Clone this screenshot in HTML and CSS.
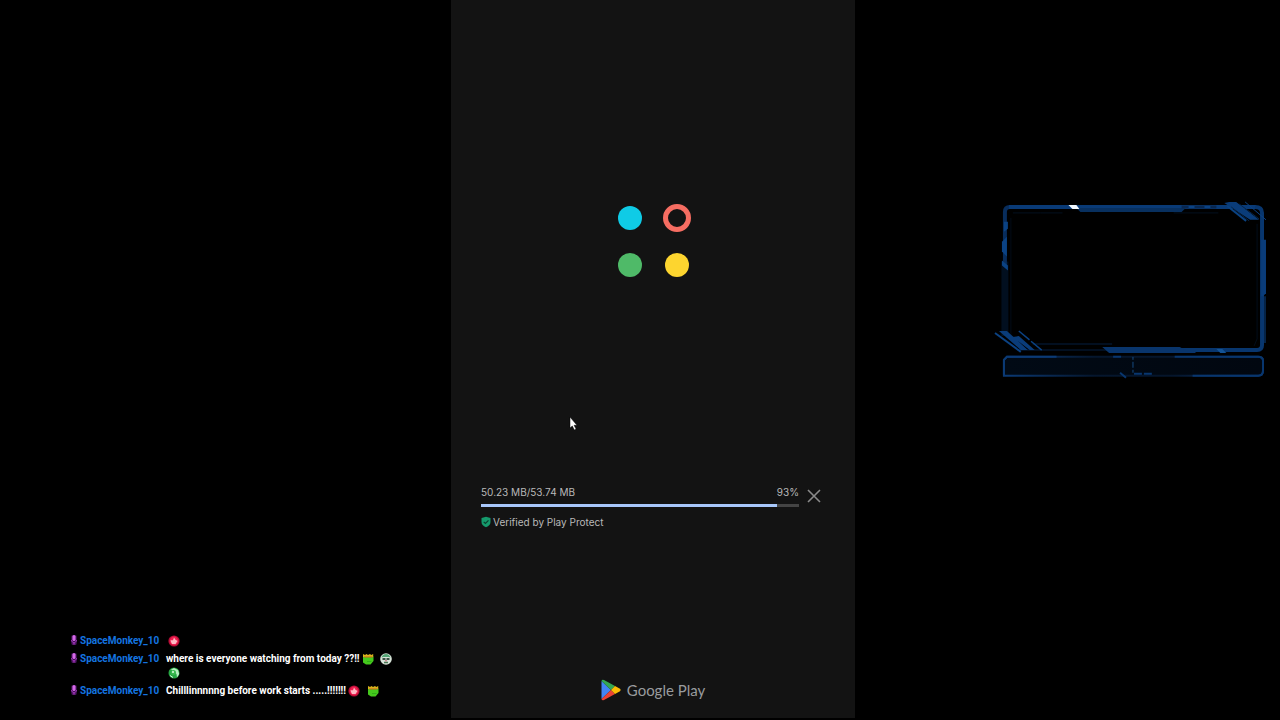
FILE: index.html
```html
<!DOCTYPE html>
<html lang="en">

<head>
    <meta charset="UTF-8">
    <meta name="viewport" content="width=device-width, initial-scale=1.0">
    <title>Stream</title>
    <link rel="stylesheet" href="styles.css">
</head>

<body>
    <!-- shared shapes -->
    <svg class="defs" aria-hidden="true">
        <symbol id="mic" viewBox="0 0 8 12">
            <rect x="1" y="1" width="6" height="10" rx="2" fill="#320c42" />
            <rect x="2.4" y="1" width="3.2" height="6" rx="1.6" fill="#d568e8" />
            <path d="M1.500 6q0 2.500 2.500 2.500T6.500 6M4 8v2M2.500 10h3" fill="none" stroke="#a034b8" />
        </symbol>
        <symbol id="fire" viewBox="0 0 12 12">
            <circle cx="6" cy="6" r="5.6" fill="#b00c34" />
            <circle cx="6" cy="6" r="4.4" fill="#ee1f50" />
            <path d="M2.500 5.200h2.500L6 2.500l1.500 2.200L9.500 6 7.500 9H4L3 7z" fill="#ffb9c4" />
        </symbol>
        <symbol id="frog" viewBox="0 0 12 12">
            <path d="M1 3.5h10.500V8L8.500 11.500H4L1 9.500z" fill="#45c91d" />
            <path d="M1 4V1l2 1L4.500 1 6 2l2-1 1.200 1 2-1v3z" fill="#d9b41d" />
            <path d="M2 4h8.500" stroke="#c8641c" />
            <path d="M5 8.500h4.500" stroke="#2fae17" />
        </symbol>
        <symbol id="face" viewBox="0 0 12 12">
            <circle cx="6" cy="6" r="5.800" fill="#d8e4d9" />
            <path d="M1.500 4.500Q2.500 1 6 1t4.500 3.500L8.500 4h-5z" fill="#54a475" />
            <path d="M2.500 5h3v2h-3zM6.500 5h3v2h-3z" fill="#3b5144" />
            <path d="M4 9.500h4" stroke="#497553" stroke-width="1.500" />
            <path d="M5 7.800h2" stroke="#c66774" />
        </symbol>
        <symbol id="swirl" viewBox="0 0 12 12">
            <circle cx="6" cy="6" r="5.5" fill="#27a844" />
            <path d="M3 2.5L6 1l4 2 1.2 4L9 10.5 8.5 7z" fill="#b5edbf" />
            <circle cx="5.5" cy="5.5" r="2.5" fill="#39bb50" />
            <circle cx="5" cy="5" r="1" fill="#dcffe1" />
            <path d="M2 8.5l3 2" stroke="#d9f8df" />
        </symbol>
    </svg>

    <main class="stage">
        <section class="chat">
            <ul class="messages">
                <li class="message">
                    <svg class="mic"><use href="#mic" /></svg>
                    <span class="user">SpaceMonkey_10</span>
                    <p class="text"><svg class="emote"><use href="#fire" /></svg></p>
                </li>
                <li class="message">
                    <svg class="mic"><use href="#mic" /></svg>
                    <span class="user">SpaceMonkey_10</span>
                    <p class="text">where is everyone watching from today ??!!<svg class="emote"><use href="#frog" /></svg> <svg class="emote"><use href="#face" /></svg> <svg class="emote"><use href="#swirl" /></svg></p>
                </li>
                <li class="message">
                    <svg class="mic"><use href="#mic" /></svg>
                    <span class="user">SpaceMonkey_10</span>
                    <p class="text">Chilllinnnnng before work starts .....!!!!!!!<svg class="emote"><use href="#fire" /></svg> <svg class="emote"><use href="#frog" /></svg></p>
                </li>
            </ul>
        </section>

        <section class="phone">
            <div class="dots">
                <span class="dot blue"></span>
                <span class="dot ring"></span>
                <span class="dot green"></span>
                <span class="dot yellow"></span>
            </div>
            <div class="download">
                <div class="download-info">
                    <div class="sizes">
                        <label for="progress">50.23 MB/53.74 MB</label>
                        <span>93%</span>
                    </div>
                    <progress id="progress" class="bar" value="93" max="100"></progress>
                    <p class="verified">
                        <svg class="shield" viewBox="0 0 10 12">
                            <path d="M5 .8L9.5 2v4q0 3.5-4.5 5.2Q.5 9.500.5 6V2z" fill="#159a6c" />
                            <path d="M2.700 5.800l1.700 1.700L7.500 4.300" fill="none" stroke="#0b3f2e" stroke-width="1.200" />
                        </svg>Verified by Play Protect
                    </p>
                </div>
                <button class="close" type="button" aria-label="Cancel">
                    <svg viewBox="0 0 14 14"><path d="M1 1l12 12M13 1L1 13" stroke="#8a8a8a" stroke-width="1.600" /></svg>
                </button>
            </div>
            <div class="brand">
                <svg class="play" viewBox="0 0 20 22">
                    <path d="M.5 2v18L10 11z" fill="#4285f4" />
                    <path d="M.5 2Q1 0 3 1l11 6-4 4z" fill="#34a853" />
                    <path d="M.5 20Q1 22 3 21l11-6-4-4z" fill="#ea4335" />
                    <path d="M14 7l5 2.800q1.200 1.200 0 2.400L14 15l-4-4z" fill="#fbbc04" />
                </svg>
                <span>Google Play</span>
            </div>
            <svg class="cursor" viewBox="0 0 9 15"><path d="M1 1v11l2.300-2 2 4 1.800-1-2-3.700H8z" fill="#fff" stroke="#000" stroke-width=".5" /></svg>
        </section>

        <section class="camera">
            <svg class="frame" viewBox="0 0 276 184" fill="none">
                <defs>
                    <linearGradient id="plate">
                        <stop offset="0" stop-color="#0b3a75" />
                        <stop offset=".35" stop-color="#05162d" />
                        <stop offset=".65" stop-color="#05152b" />
                        <stop offset="1" stop-color="#09356c" />
                    </linearGradient>
                    <linearGradient id="fill">
                        <stop offset="0" stop-color="#010a15" />
                        <stop offset="1" stop-color="#010710" />
                    </linearGradient>
                </defs>
                <!-- left side -->
                <path d="M12 62v75" stroke="#020f1f" stroke-width="7" />
                <path d="M12 66V12q0-5 5-5" stroke="#082d5c" stroke-width="4" />
                <path d="M9 42l5-5v20l-5-5z" fill="#0b4283" />
                <path d="M9 61l6 5v5l-6-5zM11 22h4v7l-4 3z" fill="#0b4283" />
                <path d="M18 18v120" stroke="#020b17" />
                <!-- top side -->
                <path d="M16 7h249" stroke="#093a76" stroke-width="4" />
                <path d="M84 8h110l-4 4H88z" fill="#08305f" />
                <path d="M190 7h35" stroke="#082750" stroke-width="3" />
                <path d="M197 7h6M213 7h6" stroke="#0b4283" stroke-width="2" />
                <path d="M76 5h8l3 4h-7z" fill="#f3faff" />
                <path d="M48 13h22M182 13h45M20 13h28" stroke="#03101f" />
                <!-- right side -->
                <path d="M264 7q7 0 7 6v133q0 5-5 5H183" stroke="#08366e" stroke-width="4" />
                <path d="M270 40h5v54l-3 3h-2z" fill="#0a3c79" />
                <path d="M274 97v47" stroke="#062447" stroke-width="2" />
                <path d="M266 24v116l-3 7" stroke="#020d1a" />
                <!-- bottom side -->
                <path d="M40 145h80M24 151h98" stroke="#020f20" stroke-width="2" />
                <path d="M110 148h78l6 3h10v3h-87z" fill="#09356c" />
                <path d="M225 150h6l4 4h-6z" fill="#135395" />
                <!-- corner slashes -->
                <path d="M236 6l19 15" stroke="#0a4282" stroke-width="2" />
                <path d="M233 3l5-1h7l23 18h-9z" fill="#0a3c79" />
                <path d="M240 7l18 14M248 4l20 15" stroke="#062447" />
                <path d="M254 2l21 18" stroke="#0b4283" />
                <path d="M2 134l26 19" stroke="#0b4283" stroke-width="2" />
                <path d="M6 132h8l21 19h-7zM20 138l6-1 16 14h-5z" fill="#0a3c79" />
                <path d="M26 132l24 20" stroke="#0b4283" stroke-width="1.500" stroke-dasharray="14 2" />
                <!-- name plate -->
                <path d="M14 158h253q5 0 5 4v10q0 5-5 5H11v-16z" fill="url(#fill)" stroke="url(#plate)" stroke-width="2" />
                <path d="M11 177v-16l3-3h50" stroke="#0b3a75" stroke-width="2" />
                <path d="M183 158h84q5 0 5 4v10q0 5-5 5h-66" stroke="#08366e" stroke-width="2" />
                <path d="M121 158h8M128 174l6 5M142 175h18" stroke="#08366e" stroke-width="2" stroke-dasharray="8 2" />
                <path d="M141 158v17" stroke="#164c82" stroke-dasharray="3 2 6 2" />
            </svg>
        </section>
    </main>
</body>

</html>
```
FILE: styles.css
```css
* {
    margin: 0;
    padding: 0;
    box-sizing: border-box;
}

body {
    background: #000;
    color: #fff;
    font-family: Roboto, "Liberation Sans", sans-serif;
}

ul {
    list-style: none;
}

svg {
    display: block;
}

.defs {
    position: absolute;
    width: 0;
    height: 0;
}

.stage {
    display: grid;
    grid-template-columns: 451fr 404fr 425fr;
    min-height: 100vh;
}

/* chat */
.chat {
    display: flex;
    align-items: flex-end;
    padding: 0 48px 22px 70px;
}

.messages {
    display: flex;
    flex-direction: column;
    gap: 4px;
}

.message {
    display: flex;
    align-items: flex-start;
    font-size: 10px;
    font-weight: 700;
    line-height: 14px;
}

.mic {
    flex: none;
    width: 8px;
    height: 12px;
    margin-right: 2px;
}

.user {
    flex: none;
    width: 86px;
    color: #1475e0;
}

.text {
    max-width: 230px;
}

.emote {
    display: inline-block;
    width: 12px;
    height: 12px;
    margin: 0 2px;
    vertical-align: middle;
}

/* phone screen */
.phone {
    position: relative;
    display: flex;
    flex-direction: column;
    padding: 204px 30px 17px;
    border-bottom: 2px solid #000;
    background: #131313;
}

.dots {
    display: grid;
    grid-template-columns: 28px 28px;
    gap: 19px;
    justify-content: center;
    place-items: center;
}

.dot {
    width: 24px;
    height: 24px;
    margin: 2px;
    border-radius: 50%;
}

.blue {
    background: #0fcbe6;
}

.ring {
    width: 28px;
    height: 28px;
    margin: 0;
    border: 5px solid #f66d62;
}

.green {
    background: #4fba68;
}

.yellow {
    background: #fdd52f;
}

.download {
    display: flex;
    gap: 6px;
    margin-top: 206px;
    color: #b9b9b9;
    font-family: Inter, Roboto, sans-serif;
    font-size: 10px;
    line-height: 14px;
}

.download-info {
    flex: 1;
}

.sizes {
    display: flex;
    justify-content: space-between;
}

.bar {
    display: block;
    width: 100%;
    height: 3px;
    margin: 5px 0 8px;
    border: 0;
    background: #444;
    appearance: none;
}

.bar::-webkit-progress-bar {
    background: #444;
}

.bar::-webkit-progress-value {
    background: #a8c7fa;
}

.verified {
    display: flex;
    align-items: center;
    gap: 2px;
}

.shield {
    width: 10px;
    height: 12px;
}

.close {
    width: 18px;
    height: 18px;
    margin: 2px 2px 2px 0;
    padding: 2px;
    border: 0;
    background: none;
    cursor: pointer;
}

.close svg {
    width: 14px;
    height: 14px;
}

.brand {
    display: flex;
    align-items: center;
    justify-content: center;
    gap: 6px;
    margin-top: auto;
    color: #999b9e;
    font-family: Lato, sans-serif;
    font-size: 15px;
    line-height: 20px;
}

.play {
    width: 20px;
    height: 22px;
}

.cursor {
    position: absolute;
    top: 416px;
    left: 118px;
    width: 9px;
    height: 15px;
}

/* camera overlay */
.camera {
    padding: 200px 13px 0 138px;
}

.frame {
    width: 100%;
}
```
